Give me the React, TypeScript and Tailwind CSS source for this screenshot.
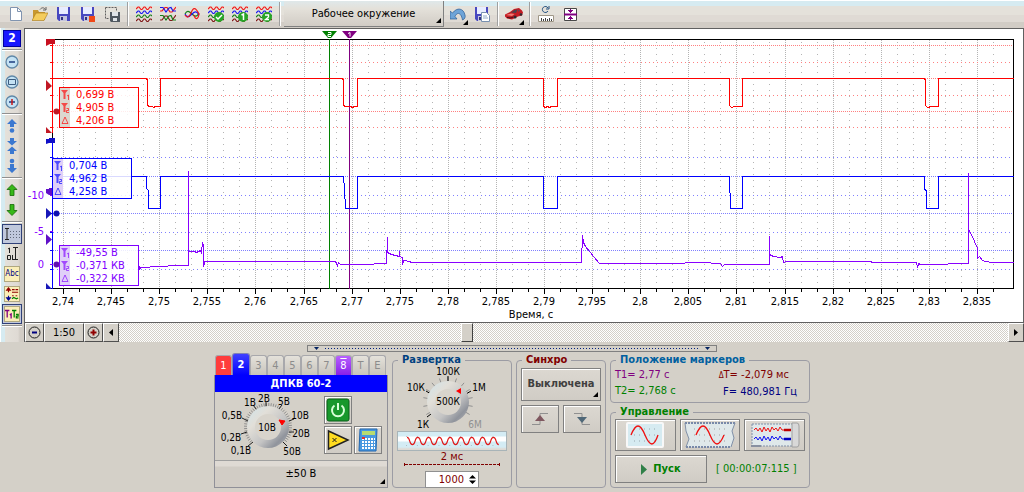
import * as React from "react"

const TIME_LABELS = [
  "2,74", "2,745", "2,75", "2,755", "2,76", "2,765", "2,77", "2,775", "2,78", "2,785",
  "2,79", "2,795", "2,8", "2,805", "2,81", "2,815", "2,82", "2,825", "2,83", "2,835",
]

const GRID_ROWS = [
  { y: 45, color: "#ff8080", dense: true },
  { y: 62, color: "#ff8080", dense: false },
  { y: 78, color: "#ff8080", dense: true },
  { y: 95, color: "#ff8080", dense: false },
  { y: 111, color: "#ff8080", dense: true },
  { y: 127, color: "#ff8080", dense: false },
  { y: 157, color: "#8080ff", dense: false },
  { y: 176, color: "#8080ff", dense: true },
  { y: 195, color: "#8080ff", dense: false },
  { y: 213, color: "#8080ff", dense: true },
  { y: 232, color: "#8080ff", dense: false },
  { y: 250, color: "#8080ff", dense: true },
  { y: 269, color: "#8080ff", dense: false },
]

const RED_TRACE =
  "52,78 146,78 147,80 147,105 149,106 152,106 153,107 155,106 160,106 160,78 342,78 343,80 343,105 345,106 350,106 352,107 354,106 357,106 357,78 543,78 543,106 545,107 547,106 549,107 551,106 557,106 557,78 729,78 729,105 731,107 734,106 742,106 742,78 924,78 925,80 925,105 927,107 931,106 938,106 938,78 1013,78"

const BLUE_TRACE =
  "52,176 146,176 146,188 148,190 148,208 160,208 160,176 343,176 344,188 345,208 357,208 357,176 543,176 543,208 557,208 557,176 729,176 730,208 742,208 742,176 924,176 924,189 926,190 926,208 938,208 938,176 1013,176"

const PURPLE_TRACE =
  "139,265 139,269 140,267 160,266 175,265 188,265 188,170 188,251 194,251 196,252 200,250 201,252 202,242 203,246 203,266 204,262 204,261 335,261 337,265 338,262 340,264 362,264 386,263 387,237 387,252 391,254 395,255 399,256 399,250 399,256 402,257 402,264 403,260 409,261 411,262 581,262 582,235 583,242 585,246 589,251 599,263 670,263 700,262 720,263 722,266 724,264 769,264 769,235 769,254 773,256 780,257 782,256 783,262 786,261 870,261 872,262 876,262 916,262 917,267 918,263 920,264 946,264 949,263 968,263 968,172 968,229 971,234 977,248 977,258 979,256 982,260 985,261 992,262 1013,262"

function tickX(i: number) {
  return Math.round(63 + (i * 914) / 19)
}

function Chart() {
  const thirds = Array.from({ length: 60 }, (_, i) => i - 1).filter((i) => i % 3 !== 0)
  return (
    <svg
      viewBox="25 29 998 293"
      className="block h-auto w-full font-[DejaVu_Sans_Condensed,Liberation_Sans,sans-serif] text-[11px]"
    >
      <g transform="translate(.5 .5)" fill="none" shapeRendering="crispEdges">
        {thirds.filter((i) => i > 0).map((i) => {
          const x = Math.round(63 + (i * 914) / 57)
          return (
            <g key={i}>
              <path d={`M${x} 41V288`} stroke="#b4b4b4" strokeDasharray="1 5" />
              <path d={`M${x} 288v3`} stroke="#000" />
            </g>
          )
        })}
        {TIME_LABELS.map((label, i) => (
          <g key={label}>
            <path d={`M${tickX(i)} 39.500V288`} stroke="#b4b4b4" strokeDasharray="1 1" />
            <path d={`M${tickX(i)} 288v5`} stroke="#000" />
          </g>
        ))}
        {GRID_ROWS.map((row) => (
          <path
            key={row.y}
            d={`M52.500 ${row.y}H1013`}
            stroke={row.color}
            strokeDasharray={row.dense ? "1 1" : "1 3"}
          />
        ))}
        {GRID_ROWS.map((row) => (
          <path key={row.y} d={`M49 ${row.y}H52`} stroke={row.y < 130 ? "#f00" : "#00f"} />
        ))}
        <path d="M52 39H1013V288H48M52 131v10" stroke="#000" />
        <path d="M52 39V132" stroke="#f00" />
        <path d="M52 140V288" stroke="#00f" />
        <path d="M49 195h3M49 231h3M49 264h3" stroke="#80f" />
        <path d="M329 38V288" stroke="#008000" />
        <path d="M349 38V288" stroke="#800080" />
        <polyline points={RED_TRACE} stroke="#f00" />
        <polyline points={BLUE_TRACE} stroke="#00f" />
        <polyline points={PURPLE_TRACE} stroke="#80f" />
      </g>

      {/* axis handles */}
      <path d="M46 39h9v5h-5l-4 2z" fill="#c81020" />
      <path d="M46 80v11l6-5zM46 127v6h6z" fill="#c01824" />
      <circle cx="56.500" cy="111.500" r="3" fill="#c01824" />
      <path d="M46 139h3v-1h6v5h-6l-3 1z" fill="#1010c8" />
      <path d="M46 208v11l6-5.500zM46 283v6h6z" fill="#1818b8" />
      <circle cx="56.500" cy="213.500" r="3" fill="#1010b0" />
      <path d="M46 234v11l6-5.500zM46 189h3v-1h4v7h-4l-3-2z" fill="#6010c8" />
      <circle cx="56.500" cy="264.500" r="3" fill="#6010b0" />

      {/* time markers */}
      <path d="M322 31h15l-6 7h-3z" fill="#008000" />
      <path d="M342 31h15l-6 7h-3z" fill="#800080" />
      <path d="M328 32.500h3v2h-3v2h3M348 33.500l2-1v4" fill="none" stroke="#fff" />

      <g fill="#80f" textAnchor="end">
        <text x="44" y="199">-10</text>
        <text x="44" y="235">-5</text>
        <text x="44" y="268">0</text>
      </g>
      <g textAnchor="middle">
        {TIME_LABELS.map((label, i) => (
          <text key={label} x={tickX(i)} y="305">{label}</text>
        ))}
        <text x="531" y="318">Время, с</text>
      </g>
    </svg>
  )
}

function Readout({ values, className, stripe }: { values: string[]; className: string; stripe: string }) {
  return (
    <div className={`absolute flex h-[41px] w-20 border bg-white/85 ${className}`}>
      <svg viewBox="0 0 10 39" className={`h-[39px] w-[10px] ${stripe}`} fill="currentColor">
        <path d="M1 2h7L5.500 5v6h-2V5zM1 15h7l-2.500 3v6h-2v-6z" opacity=".65" />
        <path
          d="M8.500 7v5M7 8l1.500-1M6.500 20.500h2v2h-2v2h2.500M2 35.500h6L5 29z"
          fill="none"
          stroke="currentColor"
          opacity=".65"
        />
      </svg>
      <ul className="pl-[6px] leading-[13px]">
        {values.map((value) => (
          <li key={value} className="whitespace-nowrap">{value}</li>
        ))}
      </ul>
    </div>
  )
}

const WAVE = "M0 2.500 2 .5h1L5 3h1L8 .5h1L11 3h1L14 .5h1l1 1"

function Waves({ colors, badge }: { colors: string[]; badge?: string }) {
  return (
    <svg viewBox="0 0 16 16" className="size-4" fill="none">
      {colors.map((color, i) => (
        <path key={i} d={WAVE} stroke={color} strokeWidth="1.200" transform={`translate(0 ${i * 4 + 0.5})`} />
      ))}
      {badge && <circle cx="11" cy="11" r="5" fill="#28a428" />}
      {badge === "ok" && <path d="m8 11 2 2 4-4" stroke="#fff" strokeWidth="1.500" />}
      {badge === "1" && <path d="m9.500 9 2-1v6" stroke="#fff" strokeWidth="1.500" />}
      {badge === "2" && <path d="M9 9h3.500v2l-3 2.500H13" stroke="#fff" strokeWidth="1.300" />}
    </svg>
  )
}

function Floppy() {
  return (
    <>
      <path d="M1 1h13v14H3l-2-2z" fill="#4848c0" />
      <path d="M3 1h9v7H3z" fill="#e8ecff" />
      <path d="M4 10h7v5H4z" fill="#c4c4dc" />
      <path d="M5 11h2v3H5z" fill="#303080" />
    </>
  )
}

function ToolIcon({ children }: { children: React.ReactNode }) {
  return (
    <svg viewBox="0 0 16 16" className="size-4" fill="none">
      {children}
    </svg>
  )
}

function ToolButton({ label, menu, children }: { label: string; menu?: boolean; children: React.ReactNode }) {
  return (
    <button type="button" aria-label={label} className="relative flex h-7 w-6 items-center justify-center">
      {children}
      {menu && <Corner />}
    </button>
  )
}

function Corner() {
  return (
    <svg viewBox="0 0 5 5" className="absolute right-[2px] bottom-[3px] size-[5px]">
      <path d="M5 0v5H0z" />
    </svg>
  )
}

function Divider() {
  return <div className="mx-[3px] h-6 w-[2px] border-l border-[#a0a0a0] bg-white" />
}

const RGBK = ["#f01818", "#1818f0", "#188018", "#801818"]

function Toolbar() {
  return (
    <div className="flex h-7 items-center bg-[linear-gradient(#ffffff_1px,#d6ebf1_1px,#d6ebf1_6px,#e4e1da_6px,#e4e1da_15px,#dfdad4_15px,#dfdad4_22px,#d1ccc5_22px)] pl-1">
      <ToolButton label="Новый">
        <ToolIcon>
          <path d="M2.500 1.500h7l4 4v9h-11z" fill="#fff" stroke="#8094b0" />
          <path d="M9.500 1.500v4h4" stroke="#8094b0" />
        </ToolIcon>
      </ToolButton>
      <ToolButton label="Открыть">
        <ToolIcon>
          <path d="M1 4h5l1 2h6v8H1z" fill="#c89830" />
          <path d="M4 7h12l-4 7.500H0z" fill="#f4cc5c" stroke="#a87818" strokeWidth=".6" />
          <path d="M8 3.500c2-2.500 4-2 5.500 0M14 1v3h-3" stroke="#606060" />
        </ToolIcon>
      </ToolButton>
      <ToolButton label="Сохранить">
        <ToolIcon><Floppy /></ToolIcon>
      </ToolButton>
      <ToolButton label="Сохранить запись">
        <ToolIcon>
          <Floppy />
          <path d="M9 10h6v6H9z" fill="#f04818" />
        </ToolIcon>
      </ToolButton>
      <ToolButton label="Сохранить фрагмент">
        <ToolIcon>
          <path d="M1.500 1.500h11v3M1.500 1.500v11h4" stroke="#606060" strokeDasharray="2 1" />
          <path d="M6 6h10v10H7l-1-1z" fill="#505860" />
          <path d="M8 6h6v4H8zM9 12h4v3H9z" fill="#e0e4e8" />
        </ToolIcon>
      </ToolButton>
      <Divider />
      <ToolButton label="Все каналы"><Waves colors={RGBK} /></ToolButton>
      <ToolButton label="Наложение каналов">
        <ToolIcon>
          <path d="M0 5 2 5 5 1.500h2L10 6h2l4-5" stroke="#f01818" strokeWidth="1.200" />
          <path d="M0 1.500h3L6 6l3-4 2-.5 2 3.500h3" stroke="#1818f0" strokeWidth="1.200" />
          <path d="M0 14h2l3-4h2l3 4.500h2L16 9" stroke="#801818" strokeWidth="1.200" />
          <path d="M0 9.500h3L6 14l3-4 2-.5 2 4.500h3" stroke="#188018" strokeWidth="1.200" />
        </ToolIcon>
      </ToolButton>
      <ToolButton label="Совместить каналы">
        <ToolIcon>
          <path d="M1 8c2-4 4-3 7 0s5 3 7-1" stroke="#188018" strokeWidth="1.200" />
          <path d="M1 8c2 4 4 3 7 0s5-3 7 1" stroke="#1818f0" strokeWidth="1.200" />
          <path d="M1 9c2 3 4 3 6-2s4-7 8 1c-1 6-4 6-5 1" stroke="#f01818" strokeWidth="1.200" />
        </ToolIcon>
      </ToolButton>
      <ToolButton label="Проверка"><Waves colors={RGBK} badge="ok" /></ToolButton>
      <ToolButton label="Набор 1"><Waves colors={RGBK} badge="1" /></ToolButton>
      <ToolButton label="Набор 2"><Waves colors={RGBK} badge="2" /></ToolButton>
      <Divider />
      <button
        type="button"
        className="relative mb-px h-[26px] w-40 border-r border-b border-[#808080] bg-[linear-gradient(#dfe8ea,#e4e1da_30%,#d1ccc5)] pt-[3px] text-center"
      >
        Рабочее окружение
        <Corner />
      </button>
      <div className="w-[2px]" />
      <ToolButton label="Отменить" menu>
        <ToolIcon>
          <path d="M0 5v8h7L5 10.500C7 6 11 6 12.500 14c2.500-1 3-3 2.500-5C13.500 2 7 1 2.500 7z" fill="#6ea4d8" stroke="#2c5c94" strokeWidth=".7" />
        </ToolIcon>
      </ToolButton>
      <ToolButton label="Сохранить как">
        <ToolIcon>
          <Floppy />
          <path d="M7.500 6.500h5l3 3v6h-8z" fill="#fff" stroke="#7890b0" />
          <path d="M9 10h4M9 12h5" stroke="#90a8c8" />
        </ToolIcon>
      </ToolButton>
      <Divider />
      <ToolButton label="Автомобиль" menu>
        <svg viewBox="0 0 18 12" className="h-3 w-[18px]">
          <path d="M0 6.500 5 4l4-3 5-1 3 2.500 1 2-1 3-4 1-6 3-5-1-2-2z" fill="#c41c24" />
          <path d="m6 4.500 3.500-2.500 3-.5-1.500 3.500z" fill="#50404c" />
          <path d="m13 1.500 2 1-2 1.500z" fill="#604858" />
          <path d="m1 7 5-1.500 3.500.5-2.500 2z" fill="#f07c74" />
          <path d="M2 9.500 6 10l2-1" fill="none" stroke="#401018" />
          <circle cx="10" cy="9" r="1.600" fill="#302830" />
          <circle cx="16" cy="6.500" r="1.300" fill="#302830" />
        </svg>
      </ToolButton>
      <Divider />
      <ToolButton label="Измерение">
        <ToolIcon>
          <path d="M10 5A3 3 0 1 1 10 2M8 3h3V0" stroke="#205080" />
          <path d="M.5 9.500h15v6H.5z" fill="#fff" stroke="#a09888" />
          <path d="M3.500 12v3M5.500 13v2M7.500 12v3M9.500 13v2M11.500 12v3M13.500 13v2" stroke="#404040" />
        </ToolIcon>
      </ToolButton>
      <ToolButton label="Маркеры">
        <ToolIcon>
          <path d="M2.500 2.500h12v12h-12z" fill="#fff" stroke="#484848" />
          <path d="M2 8.500h13" stroke="#800080" strokeWidth="2" />
          <path d="M8 3h1v1h2v1h-1v1H9v1H8V6H7V5H6V4h2zM8 14h1v-1h2v-1h-1v-1H9v-1H8v1H7v1H6v1h2z" fill="#800080" />
        </ToolIcon>
      </ToolButton>
    </div>
  )
}

function SideButton({ label, active, plate, children }: { label: string; active?: boolean; plate?: boolean; children: React.ReactNode }) {
  return (
    <button
      type="button"
      aria-label={label}
      className={`flex h-5 w-5 items-center justify-center ${active ? "border border-[#304078] bg-[#c0c8dc]" : ""}`}
    >
      <svg
        viewBox="0 0 16 16"
        className={`size-4 shrink-0 ${plate ? "border border-[#b0a880] bg-[#fbeeb8]" : ""}`}
        fill="none"
      >
        {children}
      </svg>
    </button>
  )
}

function SideDivider() {
  return <div className="my-px h-[2px] w-5 border-t border-[#909090] bg-white" />
}

function Lens({ children }: { children: React.ReactNode }) {
  return (
    <>
      <circle cx="8" cy="8" r="6" fill="#c4e2f4" stroke="#6088a8" strokeWidth="1.300" />
      {children}
    </>
  )
}

function Sidebar() {
  return (
    <div className="flex w-6 shrink-0 flex-col items-center bg-[linear-gradient(90deg,#ffffff_1px,#d6ebf1_1px,#d6ebf1_5px,#e4e1da_5px,#dfdad4_18px,#d1ccc5_20px)]">
      <div className="flex h-5 items-center">
        <button type="button" className="h-[17px] w-[18px] border border-[#0000a0] bg-[#1818ff] text-[12px] leading-[15px] font-bold text-white">
          2
        </button>
      </div>
      <SideDivider />
      <SideButton label="Уменьшить">
        <Lens><path d="M5 8h6" stroke="#1c3c80" strokeWidth="1.500" /></Lens>
      </SideButton>
      <SideButton label="По размеру">
        <Lens><path d="M4.500 5.500h7v5h-7z" stroke="#3c5c80" /></Lens>
      </SideButton>
      <SideButton label="Увеличить">
        <Lens>
          <path d="M5 8h6" stroke="#1c3c80" strokeWidth="1.500" />
          <path d="M8 5v6" stroke="#c81818" strokeWidth="1.500" />
        </Lens>
      </SideButton>
      <SideDivider />
      <SideButton label="Сдвинуть вверх">
        <path d="m8 1 5 5h-3v3H6V6H3z" fill="#3c78d0" />
        <circle cx="8" cy="12.500" r="2.300" fill="#3c78d0" />
      </SideButton>
      <SideButton label="Сжать">
        <path d="M6 0h4v3h3L8 7.500 3 3h3zM8 8.500l5 4.500h-3v3H6v-3H3z" fill="#3c78d0" />
      </SideButton>
      <SideButton label="Сдвинуть вниз">
        <path d="M6 6h4v4h3l-5 5-5-5h3z" fill="#3c78d0" />
        <circle cx="8" cy="3" r="2.300" fill="#3c78d0" />
      </SideButton>
      <SideDivider />
      <SideButton label="Канал вверх">
        <path d="m8 2.500 5 5h-3v6H6v-6H3z" fill="#38b818" stroke="#186808" strokeWidth=".8" />
      </SideButton>
      <SideButton label="Канал вниз">
        <path d="m8 13.500 5-5h-3v-6H6v6H3z" fill="#38b818" stroke="#186808" strokeWidth=".8" />
      </SideButton>
      <SideDivider />
      <SideButton label="Сетка" active>
        <path d="M1 2.500h4M3 2.500v11M1 13.500h4" stroke="#202020" />
        <path d="M6 5.500h10M6 8.500h10M6 11.500h10" stroke="#606878" strokeDasharray="1 2" />
      </SideButton>
      <SideButton label="Шкала">
        <path d="M5.500 7V2L4 3M3.500 9.500h3v4h-3zM8.500 9v5M9 1.500h5M11.500 1.500v12M9 13.500h5" stroke="#202020" />
      </SideButton>
      <button type="button" className="flex h-5 w-5 items-center justify-center">
        <span className="h-4 w-4 border border-[#b0a880] bg-[#fbeeb8] text-center text-[8px] leading-[14px] text-[#000080]">Abc</span>
      </button>
      <SideButton label="Смещение" plate>
        <path d="M4 1v5M2 3.500 4 1l2 2.500zM8 3h3M12 3h3M8 6h7" fill="#900" stroke="#900000" strokeWidth="1.300" />
        <path d="M4 15v-5M2 12.500 4 15l2-2.500z" fill="#009" stroke="#000090" strokeWidth="1.300" />
        <path d="M8 10h2M12 10h2" stroke="#900000" />
        <path d="m8 13.500 2-1.500 3 1.500 2-1" stroke="#008000" strokeWidth="1.300" />
      </SideButton>
      <SideButton label="Маркеры времени" active plate>
        <path d="M0 4h5M2.500 4v8M5.500 9 7 8v5" stroke="#800080" strokeWidth="1.500" />
        <path d="M8 4h5M10.500 4v8M12.500 8.500H15v2h-2v2h2.500" stroke="#008000" strokeWidth="1.500" />
      </SideButton>
      <SideDivider />
    </div>
  )
}

function ScrollRow() {
  const key = "flex shrink-0 items-center justify-center border border-t-white border-l-white border-r-[#505050] border-b-[#505050] bg-[#d4d0c8]"
  return (
    <div className="flex h-5 border-t border-l border-[#606060] bg-[repeating-conic-gradient(#ffffff_0_25%,#d4d0c8_0_50%)] bg-[length:2px_2px]">
      <button type="button" aria-label="Сжать время" className={`${key} w-[19px]`}>
        <svg viewBox="0 0 13 13" className="size-[13px]" fill="none">
          <circle cx="6.500" cy="6.500" r="5.500" stroke="#202020" />
          <path d="M4 6.500h5" stroke="#000080" strokeWidth="2" />
        </svg>
      </button>
      <button type="button" className={`${key} w-10 pt-px`}>1:50</button>
      <button type="button" aria-label="Растянуть время" className={`${key} w-[19px]`}>
        <svg viewBox="0 0 13 13" className="size-[13px]" fill="none">
          <circle cx="6.500" cy="6.500" r="5.500" stroke="#202020" />
          <path d="M3.500 6.500h6M6.500 3.500v6" stroke="#900000" strokeWidth="2" />
        </svg>
      </button>
      <button type="button" aria-label="Влево" className={`${key} w-4`}>
        <svg viewBox="0 0 4 7" className="h-[7px] w-1"><path d="M4 0v7L0 3.500z" /></svg>
      </button>
      <div className="flex flex-1">
        <div className="w-5/13" />
        <div className="w-3 border border-t-white border-l-white border-r-[#404040] border-b-[#404040] bg-[#d4d0c8]" />
      </div>
      <button type="button" aria-label="Вправо" className={`${key} w-4`}>
        <svg viewBox="0 0 4 7" className="h-[7px] w-1"><path d="M0 0v7l4-3.500z" /></svg>
      </button>
    </div>
  )
}

function ticks(cx: number, cy: number, from: number, to: number, step: number, r1: number, r2: number) {
  let d = ""
  for (let a = from; a <= to; a += step) {
    const rad = (a * Math.PI) / 180
    d += `M${cx + r1 * Math.sin(rad)} ${cy - r1 * Math.cos(rad)}L${cx + r2 * Math.sin(rad)} ${cy - r2 * Math.cos(rad)}`
  }
  return d
}

function KnobFace({ cx, cy, r, id }: { cx: number; cy: number; r: number; id: string }) {
  return (
    <>
      <defs>
        <linearGradient id={id} x1="0" y1="0" x2="1" y2="1">
          <stop offset="0" stopColor="#cfe4ec" />
          <stop offset=".3" stopColor="#e2dfd8" />
          <stop offset=".6" stopColor="#c4c4c4" />
          <stop offset=".8" stopColor="#90949c" />
          <stop offset="1" stopColor="#b8b8bc" />
        </linearGradient>
      </defs>
      <circle cx={cx} cy={cy} r={r} fill={`url(#${id})`} />
      <circle cx={cx} cy={cy} r={r - 8} fill="#d8d4cc" />
    </>
  )
}

const svgText = "font-[DejaVu_Sans_Condensed,Liberation_Sans,sans-serif] text-[10px]"

function VoltageKnob() {
  return (
    <svg viewBox="216 393 104 68" className={`h-[68px] w-[104px] ${svgText}`} role="img" aria-label="10В">
      <path d={ticks(268, 428, -130, 130, 6, 20, 24)} stroke="#909090" />
      <path
        d="M253 443l-5 4M247 433l-6 2M248 422l-6-3M257 411l-4-5M266 408v-5M278 411l4-5M289 422l5-2M289 433h5M283 443l4 4"
        stroke="#202020"
      />
      <KnobFace cx={268} cy={428} r={21} id="volt" />
      <path d="m279 421 6 1-3 4z" fill="#f00" stroke="#f00" />
      <text x="267" y="432" textAnchor="middle">10В</text>
      <g textAnchor="middle">
        <text x="241" y="455">0,1В</text>
        <text x="231" y="442">0,2В</text>
        <text x="232" y="420">0,5В</text>
        <text x="250" y="407">1В</text>
        <text x="264" y="403">2В</text>
        <text x="284" y="406">5В</text>
        <text x="300" y="420">10В</text>
        <text x="301" y="438">20В</text>
        <text x="292" y="456">50В</text>
      </g>
    </svg>
  )
}

function SweepKnob() {
  return (
    <svg viewBox="397 367 103 64" className={`h-16 w-[103px] self-start ${svgText}`} role="img" aria-label="500К">
      <path d={ticks(448, 402, -120, 120, 20, 20, 25)} stroke="#909090" />
      <path d="M448 381v-5M431 394l-5-3M431 414l-4 3M466 394l5-3" stroke="#000" />
      <KnobFace cx={448} cy={402} r={21} id="sweep" />
      <path d="m456 391 5-3v6z" fill="#f00" />
      <g textAnchor="middle">
        <text x="448" y="405">500К</text>
        <text x="448" y="375">100К</text>
        <text x="416" y="391">10К</text>
        <text x="479" y="391">1М</text>
        <text x="423" y="428">1К</text>
        <text x="475" y="428" fill="#909090">6М</text>
      </g>
    </svg>
  )
}

const bevel = "flex items-center justify-center border border-[#808080] shadow-[inset_1px_1px_0_#fff] bg-[linear-gradient(#dcd8d1,#d0ccc5)]"

function ChannelTabs() {
  const tab = "h-5 w-[17px] rounded-t-[3px] border border-b-0 border-[#a8a8ac]"
  const idle = `${tab} bg-[linear-gradient(#e4e1da,#c8c4bc)] text-[#8c8c8c]`
  return (
    <div className="flex items-end pl-px text-[11px] leading-[18px]">
      <button type="button" className={`${tab} bg-[#ff3c3c] text-white`}>1</button>
      <button type="button" className="h-[22px] w-[18px] rounded-t-[3px] border border-b-0 border-[#8080b8] bg-[linear-gradient(#4040ff,#0000ff)] font-bold text-white">
        2
      </button>
      {["3", "4", "5", "6", "7"].map((n) => (
        <button key={n} type="button" className={idle}>{n}</button>
      ))}
      <button type="button" className={`${tab} bg-[linear-gradient(#b860ff,#8820e8)] text-white overline`}>8</button>
      <button type="button" className={idle}>T</button>
      <button type="button" className={idle}>E</button>
    </div>
  )
}

function ChannelPanel() {
  return (
    <div className="flex w-[174px] flex-col">
      <ChannelTabs />
      <section className="relative flex flex-1 flex-col border border-t-0 border-[#909098]">
        <h2 className="bg-[#0000ff] text-center text-[11px] leading-[17px] font-bold text-white">ДПКВ 60-2</h2>
        <div className="flex h-[68px]">
          <div className="w-px" />
          <VoltageKnob />
          <div className="grid h-[60px] w-[60px] grid-cols-2 grid-rows-2 gap-1 pt-1 pl-1">
            <button type="button" aria-label="Канал включён" className={`${bevel} size-7`}>
              <svg viewBox="0 0 24 24" className="size-6" fill="none">
                <rect x="1" y="1" width="22" height="22" rx="2" fill="#18982c" stroke="#086018" />
                <path d="M8.500 7.500a6 6 0 1 0 7 0M12 5v7" stroke="#d8ffd8" strokeWidth="2" />
              </svg>
            </button>
            <span />
            <button type="button" aria-label="Усиление" className={`${bevel} size-7`}>
              <svg viewBox="0 0 24 24" className="size-6" fill="none">
                <path d="M2.500 3v18L22 12z" fill="#ffdc20" stroke="#202020" strokeWidth="1.500" />
                <path d="m6.500 10 4 4M10.500 10l-4 4" stroke="#202020" />
              </svg>
            </button>
            <button type="button" aria-label="Калькулятор" className={`${bevel} size-7`}>
              <svg viewBox="0 0 24 24" className="size-6" fill="none">
                <path d="M4 1h17l-1 22H3z" fill="#4898e0" stroke="#2468b0" />
                <path d="M6 3h13v4H6z" fill="#b8dc70" />
                <path d="M6 11h13M6 14h13M6 17h13M6 20h13" stroke="#fff" strokeWidth="2" strokeDasharray="2 1" />
                <path d="M6 10h3" stroke="#e03030" strokeWidth="2" />
              </svg>
            </button>
          </div>
        </div>
        <button
          type="button"
          className="flex-1 border-t border-[#a0a0a0] bg-[linear-gradient(#dfdad4_5px,#d1ccc5_6px)] text-[11px]"
        >
          ±50 В
          <Corner />
        </button>
      </section>
    </div>
  )
}

const group = "min-w-0 rounded-[4px] border border-[#9c9ca4] px-1"
const legend = "ml-px px-1 text-[11px] leading-[14px] font-bold"

function SweepPanel() {
  return (
    <fieldset className={`${group} w-[120px]`}>
      <legend className={`${legend} text-[#004080]`}>Развертка</legend>
      <div className="flex flex-col items-center">
        <SweepKnob />
        <svg viewBox="0 0 110 20" className="h-5 w-full border border-[#a8b4b8] bg-[linear-gradient(#d4ecf4_4px,#ffffff_5px,#ffffff_9px,#d4ecf4_10px,#d4ecf4_15px,#dfdad4_17px)]" fill="none">
          <path d="M4 5H108M4 15H108" stroke="#a8b4b8" strokeDasharray="1 11" />
          <path
            d="M5 6q2 0 3 4t3 4 3-4 3-4 3 4 3 4 3-4 3-4 3 4 3 4 3-4 3-4 3 4 3 4 3-4 3-4 3 4 3 4 3-4 3-4 3 4 3 4 3-4 3-4 3 4 3 4 3-4 3-4 3 4 3 4 3-4 3-4 3 4 3 4"
            stroke="#e01818"
            strokeWidth="1.200"
          />
        </svg>
        <label htmlFor="samples" className="text-[11px] leading-3 text-[#800000]">2 мс</label>
        <svg viewBox="0 0 96 4" className="h-1 w-24" fill="none" stroke="#800000">
          <path d="M1 1.500H95" strokeDasharray="3 1" />
          <path d="M.5 0v3M95.500 0v3" />
        </svg>
        <div className="mt-1 flex h-[17px] w-[54px] items-center border border-[#909090] bg-white">
          <input
            id="samples"
            type="text"
            defaultValue="1000"
            className="w-[38px] bg-transparent text-right text-[11px] leading-[15px] text-[#800000] outline-none"
          />
          <svg viewBox="0 0 7 11" className="ml-[5px] h-[11px] w-[7px]">
            <path d="M0 4.500 3.500 1 7 4.500zM0 6.500 3.500 10 7 6.500z" />
          </svg>
        </div>
      </div>
    </fieldset>
  )
}

function SyncPanel() {
  return (
    <fieldset className={`${group} w-[90px]`}>
      <legend className={`${legend} text-[#800000]`}>Синхро</legend>
      <button type="button" className={`${bevel} relative mt-px h-[33px] w-full text-[11px] font-bold text-[#404040]`}>
        Выключена
        <Corner />
      </button>
      <div className="mt-1 grid grid-cols-2 gap-1">
        <button type="button" aria-label="По фронту" className={`${bevel} h-7`}>
          <svg viewBox="0 0 18 14" className="h-[14px] w-[18px]" fill="none">
            <path d="M1 12.500h8v-11h8" stroke="#909090" />
            <path d="m9 3 5 6H4z" fill="#805860" />
          </svg>
        </button>
        <button type="button" aria-label="По спаду" className={`${bevel} h-7`}>
          <svg viewBox="0 0 18 14" className="h-[14px] w-[18px]" fill="none">
            <path d="M1 1.500h8v11h8" stroke="#909090" />
            <path d="m9 11 5-6H4z" fill="#506878" />
          </svg>
        </button>
      </div>
    </fieldset>
  )
}

function MarkersPanel() {
  return (
    <fieldset className={`${group} h-[50px]`}>
      <legend className={`${legend} text-[#0060a0]`}>Положение маркеров</legend>
      <div className="flex justify-between pr-2 text-[11px] leading-4 whitespace-nowrap">
        <div>
          <p className="text-[#800080]">T1= 2,77 с</p>
          <p className="text-[#008000]">T2= 2,768 с</p>
        </div>
        <div className="text-right">
          <p className="pr-2 text-[#800000]">
            <span className="text-[8px]">Δ</span>T= -2,079 мс
          </p>
          <p className="text-[#000080]">F= 480,981 Гц</p>
        </div>
      </div>
    </fieldset>
  )
}

function ControlPanel() {
  return (
    <fieldset className={`${group} flex-1`}>
      <legend className={`${legend} text-[#008000]`}>Управление</legend>
      <div className="grid grid-cols-3 gap-1">
        <button type="button" aria-label="Осциллограф" className={`${bevel} h-8`}>
          <svg viewBox="0 0 38 26" className="h-[26px] w-[38px]" fill="none">
            <rect x="1" y="1" width="36" height="24" rx="1" fill="#d6ebf1" stroke="#f8f8f8" strokeWidth="2" />
            <path d="M8 7h24M8 13h24M8 19h24" stroke="#98a8b0" strokeDasharray="1 4" />
            <path d="M5 13C10 1 14 1 19 13s9 12 13 0" stroke="#f01010" strokeWidth="1.300" />
          </svg>
        </button>
        <button type="button" aria-label="Самописец" className={`${bevel} h-8`}>
          <svg viewBox="0 0 52 26" className="h-[26px] w-[52px]" fill="none">
            <path d="M1 1h50l-3 8 2 7-3 9H2l3-8-3-8z" fill="#dfe8ea" />
            <path d="M1 1h50M2 25h45" stroke="#7888a8" strokeWidth="2" strokeDasharray="2 1" />
            <path d="m1 1 1 8 3 8-3 8M51 1l-3 8 2 7-3 9" stroke="#8090a8" />
            <path d="M10 7h32M10 13h32M10 19h32" stroke="#a0a0a0" strokeDasharray="1 4" />
            <path d="M12 13C17 1 21 1 26 13s9 12 14 0" stroke="#f01010" strokeWidth="1.300" />
          </svg>
        </button>
        <button type="button" aria-label="Запись" className={`${bevel} h-8`}>
          <svg viewBox="0 0 50 26" className="h-[26px] w-[50px]" fill="none">
            <path d="M2 2h42v22H2z" fill="#dfe8ea" stroke="#8090a8" strokeDasharray="2 1" />
            <path d="M42 1h5q2 0 2 3v18q0 3-2 3h-5z" fill="#d8d8d8" stroke="#a0a0a0" />
            <path d="M1 23h10v2H1z" fill="#8890a0" />
            <path d="m4 8 2-2 2 3 2-3 2 4 2-5 2 4 2-3 2 4 2-5 2 3 2-2 2 3 2-4 2 3h8" stroke="#f01010" />
            <path d="m4 17 2-2 2 3 2-3 2 4 2-5 2 4 2-3 2 4 2-5 2 3 2-2 2 3 2-4 2 3h8" stroke="#1010f0" />
            <path d="M34 8h7" stroke="#c00000" strokeWidth="2.500" />
            <path d="M34 17h7" stroke="#0000c0" strokeWidth="2.500" />
          </svg>
        </button>
      </div>
      <div className="mt-1 flex items-center gap-[9px] whitespace-nowrap text-[#008000]">
        <button type="button" className={`${bevel} h-7 w-[92px] gap-[6px] text-[11px] font-bold`}>
          <svg viewBox="0 0 6 11" className="h-[11px] w-[6px]" fill="#308048">
            <path d="M0 0v11l6-5.500z" />
          </svg>
          Пуск
        </button>
        <output>[ 00:00:07:115 ]</output>
      </div>
    </fieldset>
  )
}

function Splitter() {
  return (
    <div className="mx-auto mt-[3px] flex h-[7px] w-2/5 items-center gap-[6px] border border-[#808080] px-[6px]">
      <svg viewBox="0 0 5 3" className="h-[3px] w-[5px]" fill="#002060"><path d="M0 0h5L2.500 3z" /></svg>
      <div className="h-px flex-1 bg-[repeating-linear-gradient(90deg,#002080_0_1px,transparent_1px_3px)]" />
      <svg viewBox="0 0 5 3" className="h-[3px] w-[5px]" fill="#002060"><path d="M0 0h5L2.500 3z" /></svg>
    </div>
  )
}

export default function App() {
  return (
    <main className="min-h-screen bg-[#d4d0c8] pb-1 font-[DejaVu_Sans_Condensed,Liberation_Sans,sans-serif] text-[11px] text-black">
      <Toolbar />
      <div className="flex">
        <Sidebar />
        <div className="min-w-0 flex-1">
          <div className="relative border-t border-r border-l border-[#606060] bg-white">
            <Chart />
            <Readout
              values={["0,699 В", "4,905 В", "4,206 В"]}
              className="top-[58px] left-[34px] border-[#ff0000] text-[#ff0000]"
              stripe="bg-[#dcd8d0]"
            />
            <Readout
              values={["0,704 В", "4,962 В", "4,258 В"]}
              className="top-[129px] left-[27px] border-[#0000ff] text-[#0000ff]"
              stripe="bg-[#e0d0f8]"
            />
            <Readout
              values={["-49,55 В", "-0,371 КВ", "-0,322 КВ"]}
              className="top-[216px] left-[34px] border-[#8000ff] text-[#8000ff]"
              stripe="bg-[#e0d0f8]"
            />
          </div>
          <ScrollRow />
        </div>
      </div>
      <Splitter />
      <div className="mx-auto mt-px flex h-[135px] justify-center gap-1">
        <ChannelPanel />
        <SweepPanel />
        <SyncPanel />
        <div className="flex w-[200px] flex-col gap-[2px]">
          <MarkersPanel />
          <ControlPanel />
        </div>
      </div>
    </main>
  )
}
